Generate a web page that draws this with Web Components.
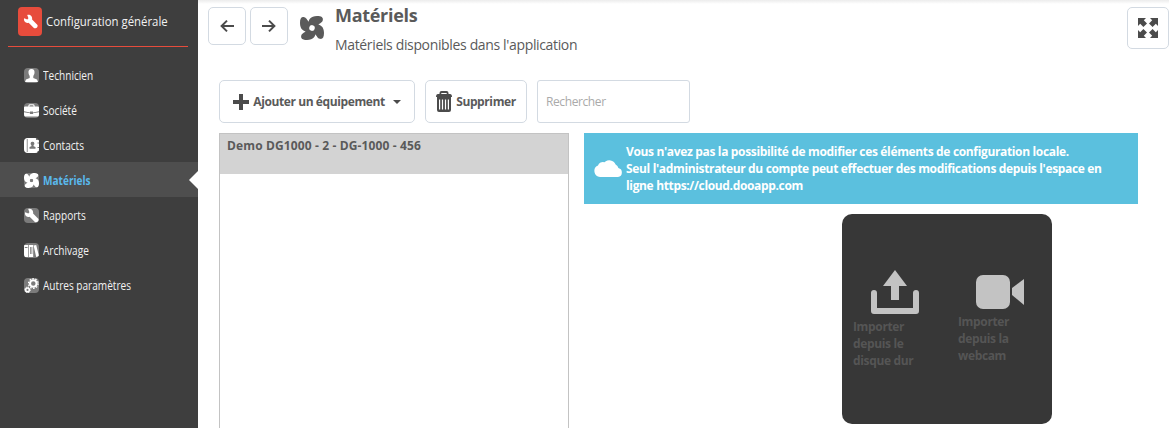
<!DOCTYPE html>
<html lang="fr">
<head>
<meta charset="utf-8">
<title>Configuration générale</title>
<style>
  body {
    margin: 0;
    width: 1169px;
    height: 429px;
    overflow: hidden;
    background: #fff;
    color: #5a5a5a;
    font-family: "Open Sans", "Noto Sans", sans-serif;
    font-size: 12px;
  }
</style>
</head>
<body>
<config-app></config-app>

<script>
const icons = {
  wrench: `<path d="M1.2 4.6 4.6 5.8 5.8 4.6 4.5 1.1C7.4.2 10.3 2.4 9.7 5.8L15.2 11.4C16.8 13.4 13.6 16.4 11.6 14.9L6 9.3C3.1 10.2.3 7.7 1.2 4.6Z"/>`,
  user: `<path d="M7.5 1C9.8 1 10.8 2.6 10.5 4.7 10.4 6.4 9.5 7.4 9.3 8.2V10L13 11.4 14 14H1L2 11.4 5.7 10V8.2C5.5 7.4 4.6 6.4 4.5 4.7 4.2 2.6 5.2 1 7.5 1Z"/>`,
  briefcase: `<path d="M4.3 3.6C4.3 1.4 5 1.3 7.5 1.3S10.7 1.4 10.7 3.6H14Q15 3.6 15 4.6V8.3L9 9.4V8.5H6V9.4L0 8.3V4.6Q0 3.6 1 3.6ZM5.4 3.6H9.6C9.6 2.3 9.2 2.3 7.5 2.3S5.4 2.3 5.4 3.6Z"/><path d="M0 9.2 6 10.3V11H9V10.3L15 9.2V13.5H0Z"/>`,
  contacts: `<path d="M1 0H12V2H15V4.5H13.5V5.5H15V9H13.5V10H15V13H13.5V15H0V1Q0 0 1 0Z"/><path fill="#777" d="M2.8 1H3.6V14H2.8ZM8.5 3.8A1.8 1.8 0 0 1 9.6 7.1V8.2L11.5 9V10.8H5.5V9L7.4 8.2V7.1A1.8 1.8 0 0 1 8.5 3.8Z"/>`,
  fan: `<circle cx="12" cy="12" r="4.4" fill="none" stroke="currentColor" stroke-width="3"/>` +
    [0, 90, 180, 270].map(a => `<path transform="rotate(${a} 12 12)" d="M8 9.5C8.2 3.5 10.5 0 17 0 21.5 0 23.4 1.4 22.8 4.2 22.2 7 18.8 7.2 17 10.5L12 9Z"/>`).join(''),
  books: `<path fill-rule="evenodd" d="M0 2H4.3V14H0ZM.8 4V4.9H3.5V4ZM5 2H9.2V14H5ZM6 4V11H6.8V4ZM7.5 4V11H8.3V4ZM9.6 2.6 12.2 2 15 13 12.2 14Z"/>`,
  gears: `<g fill="none" stroke="#fff"><circle cx="9.3" cy="5.5" r="3.3" stroke-width="2.1"/><circle cx="9.3" cy="5.5" r="4.8" stroke-width="1.2" stroke-dasharray="1.6 1.4"/><circle cx="3.5" cy="11.9" r="1.8" stroke-width="1.5"/><circle cx="3.5" cy="11.9" r="2.8" stroke-width="1" stroke-dasharray="1.2 1"/></g>`,
  left: `<path fill="none" stroke="currentColor" stroke-width="2" d="M14 7H1.8M7 1.6 1.6 7 7 12.4"/>`,
  right: `<path fill="none" stroke="currentColor" stroke-width="2" d="M0 7H12.2M7 1.6 12.4 7 7 12.4"/>`,
  expand: `<path d="M0 0H8L5.8 2.2 9 5.4 5.4 9 2.2 5.8 0 8ZM20 0V8L17.8 5.8 14.6 9 11 5.4 14.2 2.2 12 0ZM0 20V12L2.2 14.2 5.4 11 9 14.6 5.8 17.8 8 20ZM20 20H12L14.2 17.8 11 14.6 14.6 11 17.8 14.2 20 12Z"/>`,
  plus: `<path d="M6 0H10V6H16V10H10V16H6V10H0V6H6Z"/>`,
  caret: `<path d="M0 0H8L4 4Z"/>`,
  trash: `<path fill-rule="evenodd" d="M3.5 3V2Q3.5 0 5.5 0H10.5Q12.5 0 12.5 2V3H14Q16 3 16 6H0Q0 3 2 3ZM5.3 3H10.7V2H5.3ZM1 6H15V19Q15 21 13 21H3Q1 21 1 19ZM3 8.5V18.5H4.2V8.5ZM5.9 8.5V18.5H7.1V8.5ZM8.9 8.5V18.5H10.1V8.5ZM11.8 8.5V18.5H13V8.5Z"/>`,
  cloud: `<path d="M6 17A6 6 0 0 1 4 5.5 5 5 0 0 1 10.5 2.2 7 7 0 0 1 21.6 4.4 5.4 5.4 0 0 1 24.4 8 4.6 4.6 0 0 1 24 17Z"/>`,
  upload: `<path d="M24 0 36 16H28V30H20V16H12Z"/><path fill="none" stroke="currentColor" stroke-width="6" stroke-linecap="round" stroke-linejoin="round" d="M3 23V41H45V23"/>`,
  camera: `<rect width="34" height="34" rx="7"/><path d="M36 13 48 4V30L36 20Z"/>`
};

class AppIcon extends HTMLElement {
  connectedCallback() {
    const [w, h] = this.getAttribute('size').split(' ');
    const box = this.getAttribute('box') || `${w} ${h}`;
    this.attachShadow({ mode: 'open' }).innerHTML = `
      <style>
        :host { display: block; flex: none; }
        svg { display: block; overflow: visible; }
      </style>
      <svg width="${w}" height="${h}" viewBox="0 0 ${box}" fill="currentColor">${icons[this.getAttribute('name')]}</svg>`;
  }
}

class SideItem extends HTMLElement {
  connectedCallback() {
    const box = this.getAttribute('box') || '15 15';
    this.attachShadow({ mode: 'open' }).innerHTML = `
      <style>
        :host {
          display: flex;
          align-items: center;
          position: relative;
          height: 35px;
          padding-left: 24px;
          box-sizing: border-box;
          gap: 4px;
          color: #f2f2f2;
          line-height: 16px;
          white-space: nowrap;
        }
        :host([active]) { background: #4e4e4e; color: #5ab9ec; font-weight: bold; }
        :host([active])::after {
          content: "";
          position: absolute;
          right: 0;
          top: 9px;
          border: solid transparent;
          border-width: 9px 9px 9px 0;
          border-right-color: #fff;
        }
        .tile { width: 15px; height: 15px; border-radius: 4px; background: #7b7b7b; color: #fff; overflow: hidden; margin-top: 1px; }
        span { margin-top: 2px; transform: scaleX(0.84); transform-origin: left; }
      </style>
      <div class="tile"><app-icon name="${this.getAttribute('icon')}" size="15 15" box="${box}"></app-icon></div>
      <span><slot></slot></span>`;
  }
}

class SideBar extends HTMLElement {
  connectedCallback() {
    this.attachShadow({ mode: 'open' }).innerHTML = `
      <style>
        :host { display: block; background: #3e3e3e; }
        header {
          display: flex;
          gap: 4px;
          height: 47px;
          box-sizing: border-box;
          margin: 0 10px 10px 8px;
          padding: 7px 0 0 10px;
          border-bottom: 1px solid #e74c3c;
          color: #f2f2f2;
          font-size: 13px;
          line-height: 29px;
          white-space: nowrap;
        }
        header span { transform: scaleX(0.875); transform-origin: left; }
        .logo { display: flex; flex: none; align-items: center; justify-content: center; width: 24px; height: 29px; border-radius: 4px; background: #e74c3c; color: #fff; }
      </style>
      <header><div class="logo"><app-icon name="wrench" size="15 15" box="16 16"></app-icon></div><span>Configuration générale</span></header>
      <slot></slot>`;
  }
}

class UiButton extends HTMLElement {
  connectedCallback() {
    this.attachShadow({ mode: 'open' }).innerHTML = `
      <style>
        :host {
          display: flex;
          align-items: center;
          justify-content: center;
          box-sizing: border-box;
          border: 1px solid #d3dae2;
          border-radius: 5px;
          background: #fff;
          color: #4b4b4b;
          font-weight: bold;
          white-space: nowrap;
        }
      </style>
      <slot></slot>`;
  }
}

class PageHeader extends HTMLElement {
  connectedCallback() {
    this.attachShadow({ mode: 'open' }).innerHTML = `
      <style>
        :host { display: flex; align-items: flex-start; height: 80px; box-sizing: border-box; padding: 7px 0 0 10px; background: linear-gradient(#ececec, #fff 4px); }
        .nav { width: 38px; height: 38px; margin-right: 4px; }
        .fan { margin: 9px 11px 0 8px; color: #5a5a5a; }
        .text { flex: 1; }
        h1 { margin: -4px 0 0; font-size: 18px; line-height: 24px; letter-spacing: -0.3px; }
        p { margin: 8px 0 0; font-size: 14px; line-height: 20px; letter-spacing: -0.35px; }
        .full { width: 42px; height: 42px; }
      </style>
      <ui-button class="nav"><app-icon name="left" size="14 14"></app-icon></ui-button>
      <ui-button class="nav"><app-icon name="right" size="14 14"></app-icon></ui-button>
      <app-icon class="fan" name="fan" size="24 24"></app-icon>
      <div class="text">
        <h1><slot name="title"></slot></h1>
        <p><slot name="subtitle"></slot></p>
      </div>
      <ui-button class="full"><app-icon name="expand" size="20 20"></app-icon></ui-button>`;
  }
}

class ToolBar extends HTMLElement {
  connectedCallback() {
    this.attachShadow({ mode: 'open' }).innerHTML = `
      <style>
        :host { display: flex; gap: 10px; height: 43px; padding-left: 21px; }
        ui-button { gap: 4px; }
        .label { color: #5a5a5a; line-height: 17px; letter-spacing: -0.4px; }
        .add { width: 196px; }
        .add .caret { margin: 1px 0 0 4px; }
        .delete { width: 102px; }
        .search {
          width: 153px;
          box-sizing: border-box;
          padding: 0 8px;
          border: 1px solid #d3dae2;
          border-radius: 3px;
          color: #aaa;
          line-height: 42px;
          letter-spacing: -0.4px;
        }
      </style>
      <ui-button class="add"><app-icon name="plus" size="16 16"></app-icon><span class="label">Ajouter un équipement</span><app-icon class="caret" name="caret" size="8 4"></app-icon></ui-button>
      <ui-button class="delete"><app-icon name="trash" size="16 21"></app-icon><span class="label">Supprimer</span></ui-button>
      <div class="search">Rechercher</div>`;
  }
}

class DeviceList extends HTMLElement {
  connectedCallback() {
    this.attachShadow({ mode: 'open' }).innerHTML = `
      <style>
        :host { display: block; box-sizing: border-box; border: 1px solid #c3c3c3; border-bottom: 0; }
        .row { height: 40px; padding: 3px 7px 0; box-sizing: border-box; background: #d3d3d3; font-weight: bold; line-height: 17px; letter-spacing: 0.13px; }
      </style>
      <div class="row"><slot></slot></div>`;
  }
}

class CloudNotice extends HTMLElement {
  connectedCallback() {
    this.attachShadow({ mode: 'open' }).innerHTML = `
      <style>
        :host { display: flex; align-items: center; gap: 4px; height: 71px; box-sizing: border-box; padding: 0 10px; background: #5bc0de; color: #fff; }
        div { font-weight: bold; line-height: 17px; letter-spacing: -0.345px; white-space: nowrap; }
      </style>
      <app-icon name="cloud" size="28 17"></app-icon>
      <div><slot></slot></div>`;
  }
}

class ImportPanel extends HTMLElement {
  connectedCallback() {
    this.attachShadow({ mode: 'open' }).innerHTML = `
      <style>
        :host { display: grid; grid-template-columns: 105px 105px; align-items: center; width: 210px; height: 210px; border-radius: 10px; background: #373737; color: #c3c3c3; }
        .choice { padding-left: 11px; }
        app-icon { margin: 0 0 4px 18px; }
        span { display: block; color: #555; font-weight: bold; line-height: 17px; letter-spacing: -0.35px; white-space: nowrap; }
      </style>
      <div class="choice"><app-icon name="upload" size="48 44"></app-icon><span>Importer<br>depuis le<br>disque dur</span></div>
      <div class="choice"><app-icon name="camera" size="48 34"></app-icon><span>Importer<br>depuis la<br>webcam</span></div>`;
  }
}

class ConfigApp extends HTMLElement {
  connectedCallback() {
    this.attachShadow({ mode: 'open' }).innerHTML = `
      <style>
        :host { display: grid; grid-template-columns: 198px 1fr; height: 428px; }
        main { display: flex; flex-direction: column; min-width: 0; }
        .content { flex: 1; display: grid; grid-template-columns: 350px 554px; gap: 15px; padding: 10px 0 0 21px; }
        .detail { display: flex; flex-direction: column; gap: 10px; }
        import-panel { margin-left: 258px; }
      </style>
      <side-bar>
        <side-item icon="user">Technicien</side-item>
        <side-item icon="briefcase">Société</side-item>
        <side-item icon="contacts">Contacts</side-item>
        <side-item icon="fan" box="24 24" active>Matériels</side-item>
        <side-item icon="wrench" box="16 16">Rapports</side-item>
        <side-item icon="books">Archivage</side-item>
        <side-item icon="gears">Autres paramètres</side-item>
      </side-bar>
      <main>
        <page-header><span slot="title">Matériels</span><span slot="subtitle">Matériels disponibles dans l'application</span></page-header>
        <tool-bar></tool-bar>
        <div class="content">
          <device-list>Demo DG1000 - 2 - DG-1000 - 456</device-list>
          <div class="detail">
            <cloud-notice>Vous n'avez pas la possibilité de modifier ces éléments de configuration locale.<br>Seul l'administrateur du compte peut effectuer des modifications depuis l'espace en<br>ligne https://cloud.dooapp.com</cloud-notice>
            <import-panel></import-panel>
          </div>
        </div>
      </main>`;
  }
}

customElements.define('app-icon', AppIcon);
customElements.define('side-item', SideItem);
customElements.define('side-bar', SideBar);
customElements.define('ui-button', UiButton);
customElements.define('page-header', PageHeader);
customElements.define('tool-bar', ToolBar);
customElements.define('device-list', DeviceList);
customElements.define('cloud-notice', CloudNotice);
customElements.define('import-panel', ImportPanel);
customElements.define('config-app', ConfigApp);
</script>
</body>
</html>
